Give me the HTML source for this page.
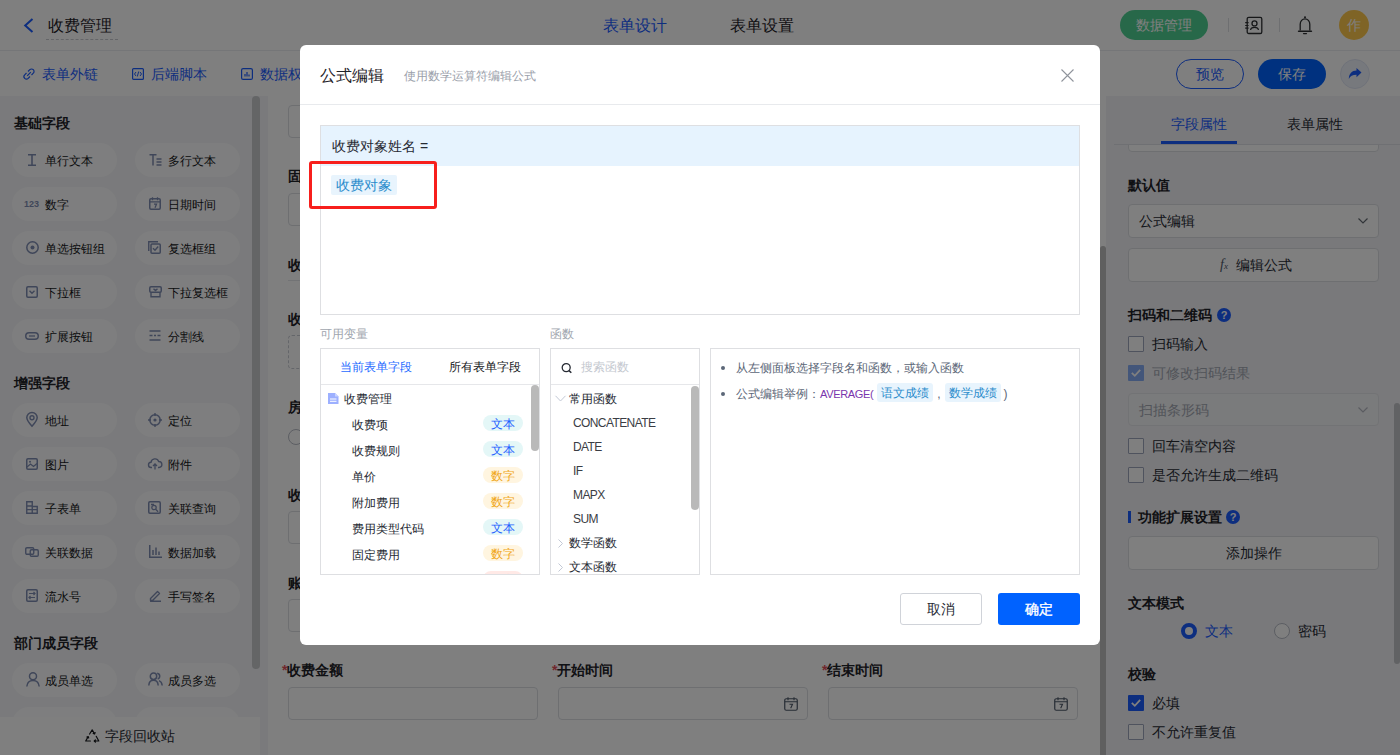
<!DOCTYPE html>
<html><head><meta charset="utf-8">
<style>
*{box-sizing:border-box;margin:0;padding:0}
html,body{width:1400px;height:755px;overflow:hidden;background:#fff;font-family:"Liberation Sans",sans-serif;color:#1f2329}
.a{position:absolute}
.t{position:absolute;white-space:nowrap;line-height:20px}
svg{position:absolute;overflow:visible}
/* header */
#hdr{left:0;top:0;width:1400px;height:51px;background:#fff;border-bottom:1px solid #ebedf0}
#tb{left:0;top:51px;width:1400px;height:45px;background:#fff}
#side{left:0;top:96px;width:268px;height:659px;background:#f4f5f8}
.pill{position:absolute;width:105px;height:34px;border-radius:17px;background:#fdfdfe}
.pill .t{left:33px;top:7px;font-size:12px;color:#1f2329}
.pill svg{left:15px;top:11px}
.sh{position:absolute;left:14px;font-size:14px;font-weight:bold;color:#1f2329;line-height:20px}
#canvas{left:268px;top:96px;width:832px;height:659px;background:#fff}
#right{left:1106px;top:96px;width:294px;height:659px;background:#f2f3f7}
.inp{position:absolute;border:1px solid #dcdee3;border-radius:4px;background:#fff}
.lbl{position:absolute;font-size:14px;font-weight:bold;color:#1f2329;line-height:20px;white-space:nowrap}
.cb{position:absolute;width:16px;height:16px;border:1px solid #9ea6bd;border-radius:1px;background:#fff}
#ov{left:0;top:0;width:1400px;height:755px;background:rgba(0,0,0,0.5)}
#modal{left:300px;top:45px;width:800px;height:600px;background:#fff;border-radius:6px}
.panel{position:absolute;border:1px solid #dedfe2;background:#fff}
.tag{position:absolute;height:16px;width:40px;border-radius:8px;font-size:12px;line-height:18px;text-align:center;overflow:hidden}
.tx{background:#e4f7f7;color:#1f62ff}
.nm{background:#fff5e0;color:#f0a616}
.rd{background:#ffe9e6;color:#f05a3c}
.fr{position:absolute;font-size:12px;color:#1f2329;line-height:20px;white-space:nowrap}
</style></head><body>
<!-- HEADER -->
<div id="hdr" class="a">
  <svg style="left:23px;top:18px" width="11" height="15" viewBox="0 0 11 15"><path d="M9.5 1 L2.2 7.5 L9.5 14" fill="none" stroke="#1b5cff" stroke-width="2"/></svg>
  <div class="t" style="left:48px;top:16px;font-size:16px;line-height:20px;color:#1f2329">收费管理</div>
  <div class="a" style="left:46px;top:39px;width:72px;height:0;border-top:1px dashed #c8cad0"></div>
  <div class="t" style="left:603px;top:16px;font-size:16px;color:#1b5cff">表单设计</div>
  <div class="t" style="left:730px;top:16px;font-size:16px;color:#1f2329">表单设置</div>
  <div class="a" style="left:1120px;top:10px;width:88px;height:30px;border-radius:15px;background:#4fd193"></div>
  <div class="t" style="left:1136px;top:15px;font-size:14px;color:#fff">数据管理</div>
  <div class="a" style="left:1228px;top:18px;width:1px;height:14px;background:#dcdee3"></div>
  <div class="a" style="left:1279px;top:18px;width:1px;height:14px;background:#dcdee3"></div>
  <svg style="left:1244px;top:16px" width="20" height="20" viewBox="0 0 20 20"><rect x="3.2" y="1.3" width="14.6" height="16.2" rx="1.6" fill="none" stroke="#2e3033" stroke-width="1.3"/><path d="M1.2 6.6h3.4M1.2 9.5h3.4M1.2 12.2h3.4" stroke="#2e3033" stroke-width="1.2"/><circle cx="10.5" cy="7.4" r="2.5" fill="none" stroke="#2e3033" stroke-width="1.3"/><path d="M6.6 14 C7 10.6 14 10.6 14.4 14" fill="none" stroke="#2e3033" stroke-width="1.3"/></svg>
  <svg style="left:1296px;top:16px" width="18" height="20" viewBox="0 0 18 20"><circle cx="9" cy="1.3" r="1" fill="#2e3033"/><path d="M4.2 14.6 V8.2 A4.8 5.4 0 0 1 13.8 8.2 V14.6" fill="none" stroke="#2e3033" stroke-width="1.3"/><path d="M2.6 15.2 H15.4" stroke="#2e3033" stroke-width="1.6" stroke-linecap="round"/><path d="M7.6 17.6 H10.4" stroke="#2e3033" stroke-width="1.4" stroke-linecap="round"/></svg>
  <div class="a" style="left:1339px;top:10px;width:30px;height:30px;border-radius:15px;background:#ffc94d"></div>
  <div class="t" style="left:1347px;top:15px;font-size:14px;color:#fff">作</div>
</div>
<!-- TOOLBAR -->
<div id="tb" class="a">
  <svg style="left:23px;top:17px" width="12" height="12" viewBox="0 0 12 12"><path d="M5 3.5 L6.8 1.7 a2.3 2.3 0 0 1 3.5 3.5 L8.5 7 M7 8.5 L5.2 10.3 a2.3 2.3 0 0 1 -3.5 -3.5 L3.5 5 M4.2 7.8 L7.8 4.2" fill="none" stroke="#1b5cff" stroke-width="1.2"/></svg>
  <div class="t" style="left:42px;top:13px;font-size:14px;color:#1b5cff">表单外链</div>
  <svg style="left:132px;top:17px" width="12" height="12" viewBox="0 0 12 12"><rect x="0.6" y="0.6" width="10.8" height="10.8" rx="1" fill="none" stroke="#1b5cff" stroke-width="1.2"/><path d="M4 4 L2.5 6 L4 8 M8 4 L9.5 6 L8 8 M6.7 3.5 L5.3 8.5" fill="none" stroke="#1b5cff" stroke-width="1"/></svg>
  <div class="t" style="left:151px;top:13px;font-size:14px;color:#1b5cff">后端脚本</div>
  <svg style="left:241px;top:17px" width="12" height="12" viewBox="0 0 12 12"><rect x="0.6" y="0.6" width="10.8" height="10.8" rx="1.5" fill="none" stroke="#1b5cff" stroke-width="1.2"/><path d="M4 8.5V6M6 8.5V4M8 8.5V6.5" stroke="#1b5cff" stroke-width="1.2"/></svg>
  <div class="t" style="left:260px;top:13px;font-size:14px;color:#1b5cff">数据权限</div>
  <div class="a" style="left:1176px;top:8px;width:68px;height:30px;border-radius:15px;border:1.5px solid #1b5cff;background:#fff"></div>
  <div class="t" style="left:1196px;top:13px;font-size:14px;color:#1b5cff">预览</div>
  <div class="a" style="left:1258px;top:8px;width:68px;height:30px;border-radius:15px;background:#0062ff"></div>
  <div class="t" style="left:1278px;top:13px;font-size:14px;color:#fff">保存</div>
  <div class="a" style="left:1340px;top:8px;width:30px;height:30px;border-radius:15px;background:#eef2fb;border:1px solid #dfe5f3"></div>
  <svg style="left:1348px;top:16px" width="14" height="14" viewBox="0 0 14 14"><path d="M13.5 5.5 L8.5 1 V3.5 C4 3.5 1 6.5 0.8 12 C2.3 9 4.5 7.8 8.5 7.8 V10.2 Z" fill="#1b5cff"/></svg>
</div>
<!-- SIDEBAR -->
<div id="side" class="a">
<div class="sh" style="top:17px">基础字段</div>
<div class="pill" style="left:12px;top:47px"><svg style="left:15px;top:11px" width="10" height="12" viewBox="0 0 10 12"><path d="M1 0.8h8M1 11.2h8M5 0.8v10.4" stroke="#7f8db3" stroke-width="1.6" fill="none"/></svg><div class="t" style="left:33px;top:8px;font-size:12px;color:#15171a">单行文本</div></div>
<div class="pill" style="left:135px;top:47px"><svg style="left:14px;top:11px" width="13" height="12" viewBox="0 0 13 12"><path d="M0.5 0.8h7M4 0.8v10.6M7.5 5h5M7.5 8h5M7.5 11h5" stroke="#7f8db3" stroke-width="1.5" fill="none"/></svg><div class="t" style="left:33px;top:8px;font-size:12px;color:#15171a">多行文本</div></div>
<div class="pill" style="left:12px;top:91px"><div class="t" style="left:12px;top:7px;font-size:9px;font-weight:bold;color:#7f8db3;letter-spacing:0px">123</div><div class="t" style="left:33px;top:8px;font-size:12px;color:#15171a">数字</div></div>
<div class="pill" style="left:135px;top:91px"><svg style="left:14px;top:10px" width="12" height="13" viewBox="0 0 12 13"><rect x="0.75" y="1.75" width="10.5" height="10.5" rx="1.2" stroke="#7f8db3" stroke-width="1.5" fill="none"/><path d="M0.75 4.8h10.5M3.5 0.3v3M8.5 0.3v3M5 7.2h2.5l-1.5 3.5" stroke="#7f8db3" stroke-width="1.3" fill="none"/></svg><div class="t" style="left:33px;top:8px;font-size:12px;color:#15171a">日期时间</div></div>
<div class="pill" style="left:12px;top:135px"><svg style="left:14px;top:10px" width="13" height="13" viewBox="0 0 13 13"><circle cx="6.5" cy="6.5" r="5.7" stroke="#7f8db3" stroke-width="1.5" fill="none"/><circle cx="6.5" cy="6.5" r="2" fill="#7f8db3"/></svg><div class="t" style="left:33px;top:8px;font-size:12px;color:#15171a">单选按钮组</div></div>
<div class="pill" style="left:135px;top:135px"><svg style="left:13px;top:10px" width="13" height="13" viewBox="0 0 13 13"><path d="M0.75 10V0.75H10" stroke="#7f8db3" stroke-width="1.4" fill="none"/><rect x="3" y="3" width="9.25" height="9.25" rx="1" stroke="#7f8db3" stroke-width="1.5" fill="none"/><path d="M5 7.3l2 2 3.2-3.8" stroke="#7f8db3" stroke-width="1.4" fill="none"/></svg><div class="t" style="left:33px;top:8px;font-size:12px;color:#15171a">复选框组</div></div>
<div class="pill" style="left:12px;top:179px"><svg style="left:14px;top:11px" width="12" height="12" viewBox="0 0 12 12"><rect x="0.75" y="0.75" width="10.5" height="10.5" rx="1.2" stroke="#7f8db3" stroke-width="1.5" fill="none"/><path d="M3.5 4.8l2.5 2.5 2.5-2.5" stroke="#7f8db3" stroke-width="1.4" fill="none"/></svg><div class="t" style="left:33px;top:8px;font-size:12px;color:#15171a">下拉框</div></div>
<div class="pill" style="left:135px;top:179px"><svg style="left:14px;top:11px" width="13" height="12" viewBox="0 0 13 12"><rect x="0.75" y="0.75" width="11.5" height="5.5" rx="1.2" stroke="#7f8db3" stroke-width="1.5" fill="none"/><path d="M2 6.25v4.5h9v-4.5M4.5 2.8l2 1.8 2-1.8" stroke="#7f8db3" stroke-width="1.4" fill="none"/></svg><div class="t" style="left:33px;top:8px;font-size:12px;color:#15171a">下拉复选框</div></div>
<div class="pill" style="left:12px;top:223px"><svg style="left:13px;top:13px" width="14" height="8" viewBox="0 0 14 8"><rect x="0.75" y="0.75" width="12.5" height="6.5" rx="3.25" stroke="#7f8db3" stroke-width="1.5" fill="none"/><path d="M4 4h6" stroke="#7f8db3" stroke-width="1.3"/></svg><div class="t" style="left:33px;top:8px;font-size:12px;color:#15171a">扩展按钮</div></div>
<div class="pill" style="left:135px;top:223px"><svg style="left:14px;top:11px" width="12" height="11" viewBox="0 0 12 11"><path d="M0.5 1h11M0.5 10h11M0.5 5.5h3M5 5.5h2M8.5 5.5h3" stroke="#7f8db3" stroke-width="1.4" fill="none"/></svg><div class="t" style="left:33px;top:8px;font-size:12px;color:#15171a">分割线</div></div>
<div class="sh" style="top:277px">增强字段</div>
<div class="pill" style="left:12px;top:307px"><svg style="left:14px;top:9px" width="12" height="15" viewBox="0 0 12 15"><path d="M6 14.2C2.5 10.5 0.8 7.8 0.8 5.6a5.2 5.2 0 0 1 10.4 0c0 2.2-1.7 4.9-5.2 8.6z" stroke="#7f8db3" stroke-width="1.5" fill="none"/><circle cx="6" cy="5.7" r="2" stroke="#7f8db3" stroke-width="1.4" fill="none"/></svg><div class="t" style="left:33px;top:8px;font-size:12px;color:#15171a">地址</div></div>
<div class="pill" style="left:135px;top:307px"><svg style="left:13px;top:10px" width="14" height="14" viewBox="0 0 14 14"><circle cx="7" cy="7" r="5.2" stroke="#7f8db3" stroke-width="1.5" fill="none"/><circle cx="7" cy="7" r="1.6" fill="#7f8db3"/><path d="M7 0v3M7 11v3M0 7h3M11 7h3" stroke="#7f8db3" stroke-width="1.4"/></svg><div class="t" style="left:33px;top:8px;font-size:12px;color:#15171a">定位</div></div>
<div class="pill" style="left:12px;top:351px"><svg style="left:14px;top:11px" width="12" height="12" viewBox="0 0 12 12"><rect x="0.75" y="0.75" width="10.5" height="10.5" rx="1.2" stroke="#7f8db3" stroke-width="1.5" fill="none"/><path d="M1 9l3.5-3 3 2.5 3.5-3" stroke="#7f8db3" stroke-width="1.3" fill="none"/><circle cx="4" cy="3.8" r="1" fill="#7f8db3"/></svg><div class="t" style="left:33px;top:8px;font-size:12px;color:#15171a">图片</div></div>
<div class="pill" style="left:135px;top:351px"><svg style="left:13px;top:11px" width="14" height="12" viewBox="0 0 14 12"><path d="M4 9.5H3.2a2.6 2.6 0 0 1-0.2-5.2 4 4 0 0 1 7.7-0.8 2.9 2.9 0 0 1 0.3 6H10" stroke="#7f8db3" stroke-width="1.4" fill="none"/><path d="M7 11.5V6M5 8l2-2 2 2" stroke="#7f8db3" stroke-width="1.3" fill="none"/></svg><div class="t" style="left:33px;top:8px;font-size:12px;color:#15171a">附件</div></div>
<div class="pill" style="left:12px;top:395px"><svg style="left:14px;top:10px" width="12" height="13" viewBox="0 0 12 13"><path d="M0.75 0.75h5.5v11.5H0.75zM6.25 5.5h5v6.75h-5M0.75 5h5.5M0.75 8.6h5.5M6.25 8.6h5" stroke="#7f8db3" stroke-width="1.4" fill="none"/></svg><div class="t" style="left:33px;top:8px;font-size:12px;color:#15171a">子表单</div></div>
<div class="pill" style="left:135px;top:395px"><svg style="left:13px;top:10px" width="13" height="13" viewBox="0 0 13 13"><rect x="0.75" y="0.75" width="11.5" height="11.5" rx="1.2" stroke="#7f8db3" stroke-width="1.5" fill="none"/><circle cx="6" cy="6.5" r="2.2" stroke="#7f8db3" stroke-width="1.3" fill="none"/><path d="M7.6 8.2l2.5 2.5M3 3.5h3" stroke="#7f8db3" stroke-width="1.3"/></svg><div class="t" style="left:33px;top:8px;font-size:12px;color:#15171a">关联查询</div></div>
<div class="pill" style="left:12px;top:439px"><svg style="left:13px;top:12px" width="14" height="10" viewBox="0 0 14 10"><rect x="0.75" y="0.75" width="8" height="6.5" rx="1.2" stroke="#7f8db3" stroke-width="1.4" fill="none"/><rect x="5.25" y="2.75" width="8" height="6.5" rx="1.2" stroke="#7f8db3" stroke-width="1.4" fill="none"/></svg><div class="t" style="left:33px;top:8px;font-size:12px;color:#15171a">关联数据</div></div>
<div class="pill" style="left:135px;top:439px"><svg style="left:14px;top:10px" width="13" height="13" viewBox="0 0 13 13"><path d="M0.75 0v12.25H13M4 10V5M7 10V2.5M10 10V6.5" stroke="#7f8db3" stroke-width="1.5" fill="none"/></svg><div class="t" style="left:33px;top:8px;font-size:12px;color:#15171a">数据加载</div></div>
<div class="pill" style="left:12px;top:483px"><svg style="left:14px;top:10px" width="12" height="13" viewBox="0 0 12 13"><rect x="0.75" y="0.75" width="10.5" height="11.5" rx="1.2" stroke="#7f8db3" stroke-width="1.5" fill="none"/><path d="M3 4.5h6M3 8.5h6M7.5 3l1.5 1.5-1.5 1.5M4.5 7l-1.5 1.5 1.5 1.5" stroke="#7f8db3" stroke-width="1.2" fill="none"/></svg><div class="t" style="left:33px;top:8px;font-size:12px;color:#15171a">流水号</div></div>
<div class="pill" style="left:135px;top:483px"><svg style="left:14px;top:10px" width="13" height="13" viewBox="0 0 13 13"><path d="M1.5 9.5L8.5 2.5l2 2-7 7H1.5zM1 12.3h11" stroke="#7f8db3" stroke-width="1.4" fill="none" stroke-linejoin="round"/></svg><div class="t" style="left:33px;top:8px;font-size:12px;color:#15171a">手写签名</div></div>
<div class="sh" style="top:537px">部门成员字段</div>
<div class="pill" style="left:12px;top:567px"><svg style="left:14px;top:9px" width="14" height="15" viewBox="0 0 14 15"><circle cx="7" cy="4.3" r="3.5" stroke="#7f8db3" stroke-width="1.5" fill="none"/><path d="M0.8 14.5C1.2 10.5 3.8 8.6 7 8.6s5.8 1.9 6.2 5.9" stroke="#7f8db3" stroke-width="1.5" fill="none"/></svg><div class="t" style="left:33px;top:8px;font-size:12px;color:#15171a">成员单选</div></div>
<div class="pill" style="left:135px;top:567px"><svg style="left:13px;top:9px" width="15" height="14" viewBox="0 0 15 14"><circle cx="5.5" cy="4.2" r="3.2" stroke="#7f8db3" stroke-width="1.5" fill="none"/><path d="M0.8 13.5C1 10 3 8.3 5.5 8.3S10 10 10.2 13.5M9.2 1.2a3 3 0 0 1 0.5 5.8M11 8.6c1.8 0.8 3 2.4 3.2 4.9" stroke="#7f8db3" stroke-width="1.5" fill="none"/></svg><div class="t" style="left:33px;top:8px;font-size:12px;color:#15171a">成员多选</div></div>
<div class="pill" style="left:12px;top:611px"></div>
<div class="pill" style="left:135px;top:611px"></div>
<div class="a" style="left:252px;top:0px;width:8px;height:573px;border-radius:4px;background:#c9cacd"></div>
<div class="a" style="left:0;top:621px;width:260px;height:38px;background:#fff"><svg style="left:85px;top:12px" width="15" height="14" viewBox="0 0 15 14"><path d="M4.6 5 L7.2 0.9 L9.6 5 M8.2 4.4 L9.6 5 L10.1 3.5 M11.2 7.3 L13.8 12 H9.2 M10.4 10.9 L9.2 12 L10.4 13.1 M5.4 12 H0.7 L3.2 7.6 M1.9 8 L3.2 7.6 L3.7 9" fill="none" stroke="#15171a" stroke-width="1.2" stroke-linejoin="round" stroke-linecap="round"/></svg><div class="t" style="left:105px;top:9px;font-size:14px;color:#262a33">字段回收站</div></div>
</div>
<!-- CANVAS -->
<div id="canvas" class="a">
<div class="inp" style="left:20px;top:9px;width:250px;height:33px"></div>
<div class="lbl" style="left:20px;top:70px">固定费用</div>
<div class="inp" style="left:20px;top:97px;width:250px;height:33px"></div>
<div class="lbl" style="left:20px;top:159px">收费信息</div>
<div class="a" style="left:20px;top:184px;width:790px;height:1px;background:#e5e6eb"></div>
<div class="lbl" style="left:20px;top:213px">收费对象</div>
<div class="a" style="left:20px;top:239px;width:790px;height:34px;border:1px dashed #c9cdd4;border-radius:4px"></div>
<div class="lbl" style="left:20px;top:301px">房屋类型</div>
<div class="a" style="left:20px;top:333px;width:16px;height:16px;border:1px solid #b8bcc6;border-radius:8px;background:#fff"></div>
<div class="lbl" style="left:20px;top:389px">收费周期</div>
<div class="inp" style="left:20px;top:415px;width:250px;height:33px"></div>
<div class="lbl" style="left:20px;top:477px">账单编号</div>
<div class="inp" style="left:20px;top:503px;width:250px;height:33px"></div>
<div class="lbl" style="left:14px;top:564px"><span style="color:#e34d59">*</span>收费金额</div>
<div class="inp" style="left:20px;top:591px;width:250px;height:33px"></div>
<div class="lbl" style="left:284px;top:564px"><span style="color:#e34d59">*</span>开始时间</div>
<div class="inp" style="left:290px;top:591px;width:250px;height:33px"><svg style="right:9px;top:9px" width="14" height="14" viewBox="0 0 14 14"><rect x="0.75" y="1.75" width="12.5" height="11.5" rx="1.5" stroke="#4e5969" stroke-width="1.2" fill="none"/><path d="M0.75 4.8h12.5M4 0.3v3M10 0.3v3M5.5 7.3h3l-1.8 4" stroke="#4e5969" stroke-width="1.1" fill="none"/></svg></div>
<div class="lbl" style="left:554px;top:564px"><span style="color:#e34d59">*</span>结束时间</div>
<div class="inp" style="left:560px;top:591px;width:250px;height:33px"><svg style="right:9px;top:9px" width="14" height="14" viewBox="0 0 14 14"><rect x="0.75" y="1.75" width="12.5" height="11.5" rx="1.5" stroke="#4e5969" stroke-width="1.2" fill="none"/><path d="M0.75 4.8h12.5M4 0.3v3M10 0.3v3M5.5 7.3h3l-1.8 4" stroke="#4e5969" stroke-width="1.1" fill="none"/></svg></div>
<div class="a" style="left:832px;top:150px;width:6px;height:520px;border-radius:3px;background:#bebebe"></div>
</div>
<!-- RIGHT -->
<div id="right" class="a">
<div class="t" style="left:65px;top:18px;font-size:14px;color:#1b5cff">字段属性</div>
<div class="t" style="left:181px;top:18px;font-size:14px;color:#262a33">表单属性</div>
<div class="a" style="left:8px;top:48px;width:286px;height:1px;background:#dfe1e6"></div>
<div class="a" style="left:55px;top:45px;width:76px;height:3px;background:#1b5cff"></div>
<div class="inp" style="left:22px;top:24px;width:251px;height:32px;clip-path:inset(25px 0 0 0)"></div>
<div class="lbl" style="left:22px;top:79px">默认值</div>
<div class="inp" style="left:22px;top:108px;width:251px;height:34px"><div class="t" style="left:10px;top:6px;font-size:14px;color:#262a33">公式编辑</div><svg style="right:10px;top:13px" width="10" height="6" viewBox="0 0 10 6"><path d="M0.5 0.5l4.5 4.5 4.5-4.5" stroke="#646a73" stroke-width="1.2" fill="none"/></svg></div>
<div class="inp" style="left:22px;top:152px;width:251px;height:34px"><div class="t" style="left:91px;top:6px;font-size:14px;font-style:italic;font-family:'Liberation Serif',serif;color:#4e5969">f<span style="font-size:9px">x</span></div><div class="t" style="left:107px;top:6px;font-size:14px;color:#262a33">编辑公式</div></div>
<div class="lbl" style="left:22px;top:209px">扫码和二维码</div>
<div class="a" style="left:111px;top:212px;width:14px;height:14px;border-radius:7px;background:#1b5cff;color:#fff;font-size:11px;font-weight:bold;line-height:14px;text-align:center">?</div>
<div class="cb" style="left:22px;top:240px"></div><div class="t" style="left:46px;top:238px;font-size:14px;color:#262a33">扫码输入</div>
<div class="a" style="left:22px;top:269px;width:16px;height:16px;border-radius:1px;background:#86acf5"><svg style="left:3px;top:4px" width="10" height="8" viewBox="0 0 10 8"><path d="M0.8 3.8l3 3 5.4-6" stroke="#fff" stroke-width="1.8" fill="none"/></svg></div><div class="t" style="left:46px;top:267px;font-size:14px;color:#a3a8b3">可修改扫码结果</div>
<div class="inp" style="left:22px;top:297px;width:251px;height:33px;background:#f5f6f8;border-color:#e5e6eb"><div class="t" style="left:10px;top:6px;font-size:14px;color:#a3a8b3">扫描条形码</div><svg style="right:10px;top:13px" width="10" height="6" viewBox="0 0 10 6"><path d="M0.5 0.5l4.5 4.5 4.5-4.5" stroke="#b5b9c2" stroke-width="1.2" fill="none"/></svg></div>
<div class="cb" style="left:22px;top:342px"></div><div class="t" style="left:46px;top:340px;font-size:14px;color:#262a33">回车清空内容</div>
<div class="cb" style="left:22px;top:371px"></div><div class="t" style="left:46px;top:369px;font-size:14px;color:#262a33">是否允许生成二维码</div>
<div class="a" style="left:22px;top:415px;width:3px;height:12px;background:#1b5cff"></div>
<div class="lbl" style="left:32px;top:411px">功能扩展设置</div>
<div class="a" style="left:120px;top:414px;width:14px;height:14px;border-radius:7px;background:#1b5cff;color:#fff;font-size:11px;font-weight:bold;line-height:14px;text-align:center">?</div>
<div class="inp" style="left:22px;top:440px;width:251px;height:34px"><div class="t" style="left:97px;top:6px;font-size:14px;color:#262a33">添加操作</div></div>
<div class="lbl" style="left:22px;top:497px">文本模式</div>
<div class="a" style="left:75px;top:527px;width:16px;height:16px;border-radius:8px;border:4.5px solid #1b5cff;background:#fff"></div>
<div class="t" style="left:99px;top:525px;font-size:14px;color:#1b5cff">文本</div>
<div class="a" style="left:168px;top:527px;width:16px;height:16px;border-radius:8px;border:1px solid #b8bcc6;background:#fff"></div>
<div class="t" style="left:192px;top:525px;font-size:14px;color:#262a33">密码</div>
<div class="lbl" style="left:22px;top:568px">校验</div>
<div class="a" style="left:22px;top:599px;width:16px;height:16px;border-radius:1px;background:#1b5cff"><svg style="left:3px;top:4px" width="10" height="8" viewBox="0 0 10 8"><path d="M0.8 3.8l3 3 5.4-6" stroke="#fff" stroke-width="1.8" fill="none"/></svg></div><div class="t" style="left:46px;top:597px;font-size:14px;color:#262a33">必填</div>
<div class="cb" style="left:22px;top:628px"></div><div class="t" style="left:46px;top:626px;font-size:14px;color:#262a33">不允许重复值</div>
<div class="a" style="left:288px;top:307px;width:6px;height:261px;border-radius:3px;background:#c3c4c8"></div>
</div>
<!-- OVERLAY -->
<div id="ov" class="a"></div>
<!-- MODAL -->
<div id="modal" class="a">
<div class="t" style="left:20px;top:21px;font-size:16px;color:#1f2329;">公式编辑</div>
<div class="t" style="left:104px;top:21px;font-size:12px;color:#9aa0aa;">使用数学运算符编辑公式</div>
<svg style="left:761px;top:24px" width="13" height="13" viewBox="0 0 13 13"><path d="M0.5 0.5l12 12M12.5 0.5l-12 12" stroke="#8f949c" stroke-width="1.1"/></svg>
<div class="a" style="left:0;top:59px;width:800px;height:1px;background:#e8eaed"></div>
<div class="panel" style="left:20px;top:80px;width:760px;height:190px;border-color:#dedfe2"></div>
<div class="a" style="left:21px;top:81px;width:758px;height:40px;background:#e6f3fe"></div>
<div class="t" style="left:32px;top:91px;font-size:14px;color:#262a33;">收费对象姓名 =</div>
<div class="a" style="left:31px;top:130px;width:66px;height:20px;border-radius:2px;background:#e8f4fd"></div>
<div class="t" style="left:36px;top:130px;font-size:14px;color:#2b8ccc;">收费对象</div>
<div class="a" style="left:9px;top:116px;width:128px;height:48px;border:3px solid #f71f1c;border-radius:3px"></div>
<div class="t" style="left:20px;top:279px;font-size:12px;color:#a0a5ae;">可用变量</div>
<div class="t" style="left:250px;top:279px;font-size:12px;color:#a0a5ae;">函数</div>
<div class="panel" style="left:20px;top:303px;width:220px;height:227px;overflow:hidden"><div class="a" style="left:0;top:35px;width:218px;height:1px;background:#e6e7ea"></div><div class="t" style="left:19px;top:8px;font-size:12px;color:#1f6bff">当前表单字段</div><div class="t" style="left:128px;top:8px;font-size:12px;color:#15171a">所有表单字段</div><svg style="left:7px;top:44px" width="11" height="11" viewBox="0 0 11 11"><path d="M0 0h7l3.5 3.5V11H0z" fill="#9db0ff"/><path d="M2 6h6.5M2 8.3h6.5" stroke="#fff" stroke-width="1"/><path d="M7 0v3.5h3.5" fill="#c9d4ff"/></svg><div class="t" style="left:23px;top:40px;font-size:12px;color:#262a33">收费管理</div><div class="t" style="left:31px;top:66px;font-size:12px;color:#262a33">收费项</div><div class="tag tx" style="left:162px;top:66px">文本</div><div class="t" style="left:31px;top:92px;font-size:12px;color:#262a33">收费规则</div><div class="tag tx" style="left:162px;top:92px">文本</div><div class="t" style="left:31px;top:118px;font-size:12px;color:#262a33">单价</div><div class="tag nm" style="left:162px;top:118px">数字</div><div class="t" style="left:31px;top:144px;font-size:12px;color:#262a33">附加费用</div><div class="tag nm" style="left:162px;top:144px">数字</div><div class="t" style="left:31px;top:170px;font-size:12px;color:#262a33">费用类型代码</div><div class="tag tx" style="left:162px;top:170px">文本</div><div class="t" style="left:31px;top:196px;font-size:12px;color:#262a33">固定费用</div><div class="tag nm" style="left:162px;top:196px">数字</div><div class="t" style="left:31px;top:222px;font-size:12px;color:#262a33">违约金</div><div class="tag rd" style="left:162px;top:222px">数字</div><div class="a" style="left:210px;top:36px;width:8px;height:66px;border-radius:4px;background:#b9b9b9"></div></div>
<div class="panel" style="left:250px;top:303px;width:150px;height:227px;overflow:hidden"><div class="a" style="left:0;top:35px;width:148px;height:1px;background:#e6e7ea"></div><svg style="left:10px;top:14px" width="12" height="11" viewBox="0 0 12 11"><circle cx="5.2" cy="4.6" r="4" stroke="#262a33" stroke-width="1.3" fill="none"/><path d="M8 7.6l2.3 2.2" stroke="#262a33" stroke-width="1.5"/></svg><div class="t" style="left:30px;top:8px;font-size:12px;color:#c4c8cf">搜索函数</div><svg style="left:3.5px;top:45.5px" width="11" height="7" viewBox="0 0 11 7"><path d="M0.5 0.8l5 5.2 5-5.2" stroke="#c3c9d6" stroke-width="1" fill="none"/></svg><div class="t" style="left:18px;top:39.5px;font-size:12px;color:#262a33">常用函数</div><div class="t" style="left:22px;top:63.5px;font-size:12px;letter-spacing:-0.6px;color:#3a3d44">CONCATENATE</div><div class="t" style="left:22px;top:87.5px;font-size:12px;letter-spacing:-0.6px;color:#3a3d44">DATE</div><div class="t" style="left:22px;top:111.5px;font-size:12px;letter-spacing:-0.6px;color:#3a3d44">IF</div><div class="t" style="left:22px;top:135.5px;font-size:12px;letter-spacing:-0.6px;color:#3a3d44">MAPX</div><div class="t" style="left:22px;top:159.5px;font-size:12px;letter-spacing:-0.6px;color:#3a3d44">SUM</div><svg style="left:7px;top:189.5px" width="5" height="9" viewBox="0 0 5 9"><path d="M0.5 0.5l4 4-4 4" stroke="#c3c9d6" stroke-width="1" fill="none"/></svg><div class="t" style="left:18px;top:183.5px;font-size:12px;color:#262a33">数学函数</div><svg style="left:7px;top:213.5px" width="5" height="9" viewBox="0 0 5 9"><path d="M0.5 0.5l4 4-4 4" stroke="#c3c9d6" stroke-width="1" fill="none"/></svg><div class="t" style="left:18px;top:207.5px;font-size:12px;color:#262a33">文本函数</div><div class="a" style="left:140px;top:37px;width:8px;height:124px;border-radius:4px;background:#b9b9b9"></div></div>
<div class="panel" style="left:410px;top:303px;width:370px;height:227px"><div class="a" style="left:10px;top:17px;width:4px;height:4px;border-radius:2px;background:#5c6778"></div><div class="t" style="left:25px;top:9px;font-size:12px;color:#5c6778">从左侧面板选择字段名和函数，或输入函数</div><div class="a" style="left:10px;top:43px;width:4px;height:4px;border-radius:2px;background:#5c6778"></div><div class="t" style="left:25px;top:35px;font-size:12px;color:#5c6778">公式编辑举例：<span style="color:#7a35ad;font-size:11px;letter-spacing:-0.35px">AVERAGE(</span><span style="display:inline-block;margin-left:4px;padding:0 4px;height:19px;line-height:21px;border-radius:3px;background:#e8f4fd;color:#2b8ccc;vertical-align:top;margin-top:-1px">语文成绩</span><span style="margin:0 4px">,</span><span style="display:inline-block;padding:0 4px;height:19px;line-height:21px;border-radius:3px;background:#e8f4fd;color:#2b8ccc;vertical-align:top;margin-top:-1px">数学成绩</span><span style="margin-left:3px">)</span></div></div>
<div class="a" style="left:600px;top:548px;width:82px;height:32px;border:1px solid #d0d3d9;border-radius:3px;background:#fff"></div>
<div class="t" style="left:627px;top:554px;font-size:14px;color:#262a33;">取消</div>
<div class="a" style="left:698px;top:548px;width:82px;height:32px;border-radius:3px;background:#0062ff"></div>
<div class="t" style="left:725px;top:554px;font-size:14px;color:#fff;-webkit-text-stroke:0.35px #fff">确定</div>
</div>
</body></html>
